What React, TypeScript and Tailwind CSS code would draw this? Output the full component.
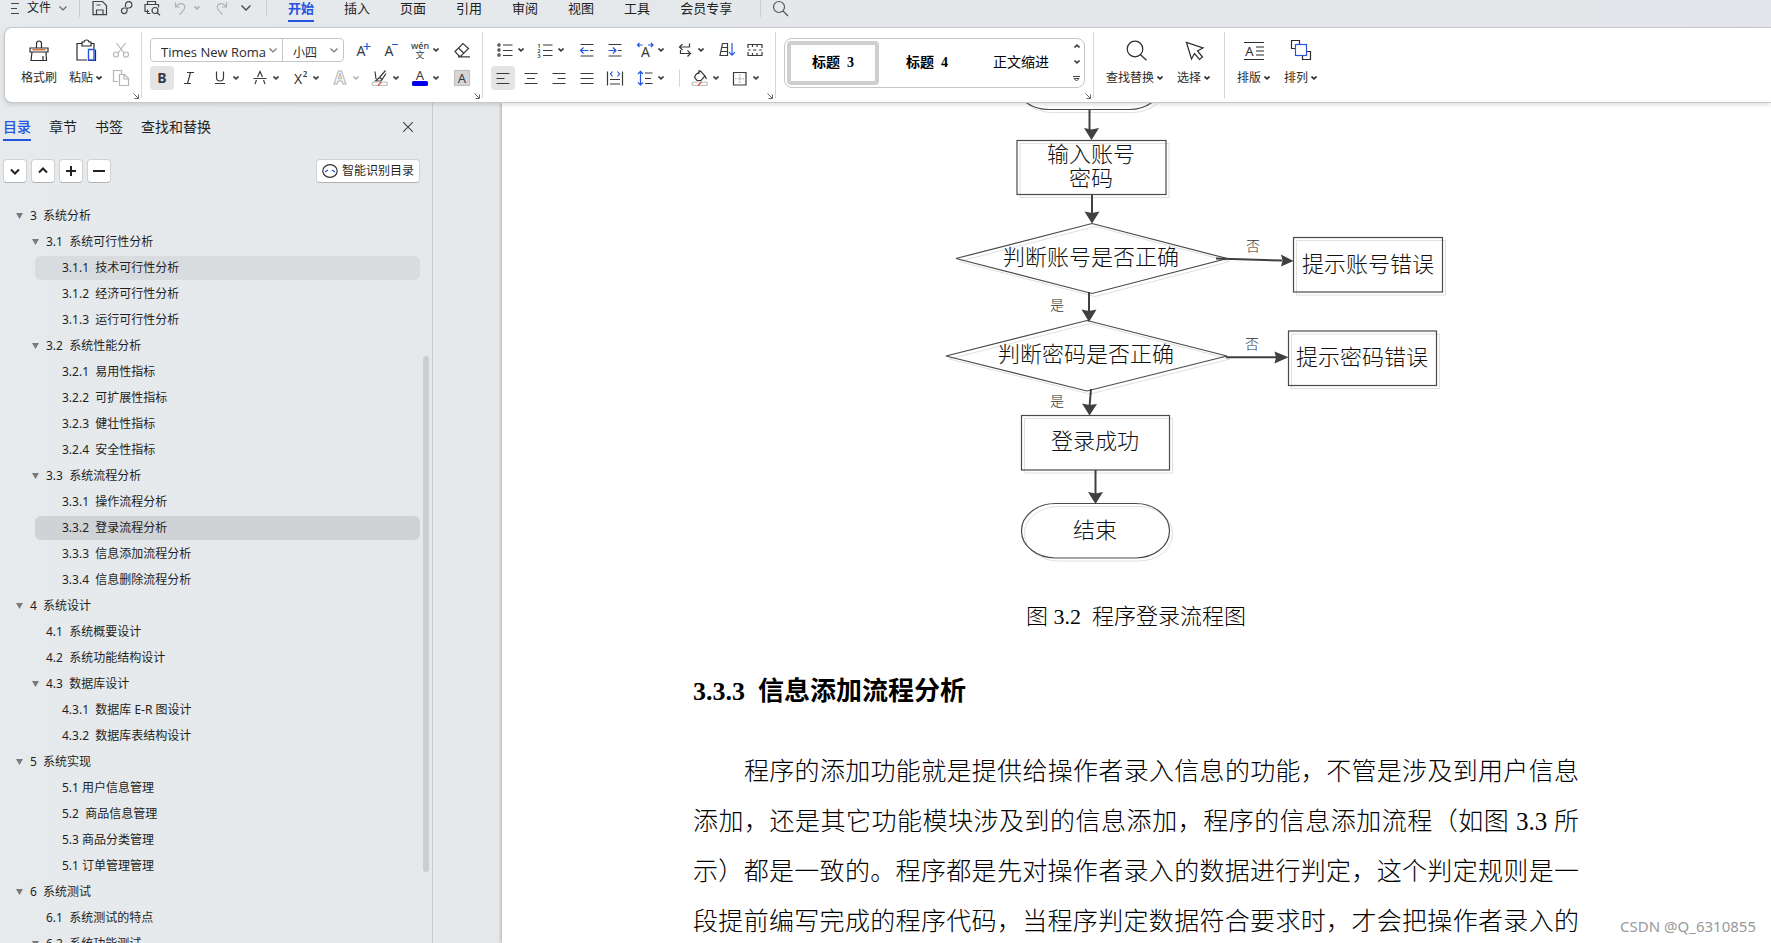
import { useState } from "react";
import type { ReactNode } from "react";
import { clsx } from "clsx";

const MENUS = ["开始", "插入", "页面", "引用", "审阅", "视图", "工具", "会员专享"];

const SIDE_TABS = ["目录", "章节", "书签", "查找和替换"];

interface OutlineItem {
  level: 1 | 2 | 3;
  text: string;
  open?: boolean;
}

const OUTLINE: OutlineItem[] = [
  { level: 1, text: "3  系统分析", open: true },
  { level: 2, text: "3.1  系统可行性分析", open: true },
  { level: 3, text: "3.1.1  技术可行性分析" },
  { level: 3, text: "3.1.2  经济可行性分析" },
  { level: 3, text: "3.1.3  运行可行性分析" },
  { level: 2, text: "3.2  系统性能分析", open: true },
  { level: 3, text: "3.2.1  易用性指标" },
  { level: 3, text: "3.2.2  可扩展性指标" },
  { level: 3, text: "3.2.3  健壮性指标" },
  { level: 3, text: "3.2.4  安全性指标" },
  { level: 2, text: "3.3  系统流程分析", open: true },
  { level: 3, text: "3.3.1  操作流程分析" },
  { level: 3, text: "3.3.2  登录流程分析" },
  { level: 3, text: "3.3.3  信息添加流程分析" },
  { level: 3, text: "3.3.4  信息删除流程分析" },
  { level: 1, text: "4  系统设计", open: true },
  { level: 2, text: "4.1  系统概要设计" },
  { level: 2, text: "4.2  系统功能结构设计" },
  { level: 2, text: "4.3  数据库设计", open: true },
  { level: 3, text: "4.3.1  数据库 E-R 图设计" },
  { level: 3, text: "4.3.2  数据库表结构设计" },
  { level: 1, text: "5  系统实现", open: true },
  { level: 3, text: "5.1 用户信息管理" },
  { level: 3, text: "5.2  商品信息管理" },
  { level: 3, text: "5.3 商品分类管理" },
  { level: 3, text: "5.1 订单管理管理" },
  { level: 1, text: "6  系统测试", open: true },
  { level: 2, text: "6.1  系统测试的特点" },
  { level: 2, text: "6.2  系统功能测试", open: true },
];

const PARAGRAPH = [
  "程序的添加功能就是提供给操作者录入信息的功能，不管是涉及到用户信息",
  "添加，还是其它功能模块涉及到的信息添加，程序的信息添加流程（如图 3.3 所",
  "示）都是一致的。程序都是先对操作者录入的数据进行判定，这个判定规则是一",
  "段提前编写完成的程序代码，当程序判定数据符合要求时，才会把操作者录入的",
];

const BLUE = "#2454e0";

/* ---------- small shared pieces ---------- */

function Icon({ children, size = 20 }: { children: ReactNode; size?: number }) {
  return (
    <svg
      width={size}
      height={size}
      viewBox={`0 0 ${size} ${size}`}
      fill="none"
      stroke="currentColor"
      strokeWidth="1.2"
      className="shrink-0 overflow-visible"
      aria-hidden="true"
    >
      {children}
    </svg>
  );
}

function Caret() {
  return (
    <svg width="6" height="4" viewBox="0 0 6 4" fill="none" stroke="currentColor" strokeWidth="1.6" className="shrink-0" aria-hidden="true">
      <path d="M0.5 0.5 3 2.8 5.5 0.5" />
    </svg>
  );
}

function Tool({
  label,
  children,
  menu,
  active,
  faded,
  className,
}: {
  label: string;
  children: ReactNode;
  menu?: boolean;
  active?: boolean;
  faded?: boolean;
  className?: string;
}) {
  return (
    <button
      type="button"
      aria-label={label}
      className={clsx(
        "flex h-6 shrink-0 items-center rounded",
        menu ? "w-10 gap-[3px] pl-0.5" : "w-6 justify-center",
        active && "bg-[#e4e4e4]",
        faded ? "text-[#b3b5b7]" : "text-[#3a3a3a]",
        className,
      )}
    >
      <Icon>{children}</Icon>
      {menu && <Caret />}
    </button>
  );
}

function BigTool({ label, menu, children }: { label: string; menu?: boolean; children: ReactNode }) {
  return (
    <button type="button" className="flex shrink-0 flex-col items-center gap-1.5 px-1 pt-0.5 text-xs text-[#2b2b2b]">
      <Icon size={22}>{children}</Icon>
      <span className="flex items-center gap-[3px] leading-5">
        {label}
        {menu && <Caret />}
      </span>
    </button>
  );
}

function Launcher() {
  return (
    <button type="button" aria-label="更多设置" className="mr-0.5 flex h-3 w-1.5 shrink-0 items-center justify-start self-end text-[#666]">
      <svg width="6" height="6" viewBox="0 0 6 6" fill="none" stroke="currentColor" className="shrink-0" aria-hidden="true">
        <path d="M0.5 0.5 5 5M5.5 1.5v4h-4" />
      </svg>
    </button>
  );
}

function Divider() {
  return <div className="my-1 w-px shrink-0 self-stretch bg-[#d5d7d9]" />;
}

function Letter({ x, y, size, children, weight = 400, fill = "currentColor" }: {
  x: number;
  y: number;
  size: number;
  children: string;
  weight?: number;
  fill?: string;
}) {
  return (
    <text x={x} y={y} fontSize={size} fontWeight={weight} fill={fill} stroke="none" textAnchor="middle">
      {children}
    </text>
  );
}

/* ---------- top menu ---------- */

function MenuBar() {
  const [current, setCurrent] = useState("开始");
  return (
    <nav className="flex h-[27px] shrink-0 items-start text-[13px] text-[#222]">
      <button type="button" className="flex h-4 items-center pl-[10px] text-xs">
        <svg width="10" height="12" viewBox="0 0 10 12" stroke="#444" strokeWidth="1.2" aria-hidden="true">
          <path d="M1 1.5h8M1 6.5h6M1 11.5h8" />
        </svg>
        <span className="ml-[7px]">文件</span>
        <svg width="8" height="5" viewBox="0 0 8 5" fill="none" stroke="#666" strokeWidth="1.2" className="ml-2" aria-hidden="true">
          <path d="M0.5 0.5 4 4 7.5 0.5" />
        </svg>
      </button>
      <div className="ml-3 h-[17px] w-px bg-[#c9ccd0]" />
      <div className="flex h-4 items-center text-[#444]">
        <button type="button" aria-label="保存" className="ml-3">
          <Icon size={16}>
            <path d="M1 1.500h9.500l4 4v9.200H1zM4.500 14.500V10h6.500v4.500M4.500 5h4" />
          </Icon>
        </button>
        <button type="button" aria-label="输出" className="ml-3">
          <Icon size={16}>
            <path d="M5.500 7V4.800a3.200 3.200 0 1 1 3.200 3.200H4.300a2.800 2.800 0 1 0 2.700 2.800V8" />
          </Icon>
        </button>
        <button type="button" aria-label="打印预览" className="ml-2">
          <Icon size={16}>
            <path d="M3.500 4.500V1.500h8v3M5 11.500H1v-7h13.500v3M3.500 9.500v4h3" />
            <circle cx="11" cy="10.500" r="3" />
            <path d="m13.200 12.700 2.800 2.600" />
          </Icon>
        </button>
        <button type="button" aria-label="撤销" className="ml-3.5 text-[#adb0b4]">
          <Icon size={14}>
            <path d="M1.500 1.500V6H6M1.500 6C4 2 9 1.500 10.500 4.500c1.200 3-1 5-5 9" />
          </Icon>
        </button>
        <span className="ml-1.5 text-[#adb0b4]"><Caret /></span>
        <button type="button" aria-label="恢复" className="ml-3.5 text-[#adb0b4]">
          <Icon size={14}>
            <path d="M12.500 1.500V6H8M12.500 6C10 2 5 1.500 3.500 4.500c-1.200 3 1 5 5 9" />
          </Icon>
        </button>
        <button type="button" aria-label="自定义" className="ml-[13px]">
          <svg width="10" height="6" viewBox="0 0 10 6" fill="none" stroke="#444" strokeWidth="1.300" aria-hidden="true">
            <path d="M0.500 0.500 5 5 9.500 0.500" />
          </svg>
        </button>
      </div>
      <div className="ml-[15px] h-[17px] w-px bg-[#c9ccd0]" />
      <div className="ml-[21px] flex gap-[30px]">
        {MENUS.map((m) => (
          <button
            key={m}
            type="button"
            onClick={() => setCurrent(m)}
            className={clsx(
              "h-[22px] border-b-2 pb-1 leading-4",
              m === current ? "border-[#2454e0] font-bold text-[#2454e0]" : "border-transparent",
            )}
          >
            {m}
          </button>
        ))}
      </div>
      <div className="ml-7 h-[17px] w-px bg-[#c9ccd0]" />
      <button type="button" aria-label="搜索" className="ml-3 text-[#555]">
        <Icon size={16}>
          <circle cx="6" cy="7" r="5.500" />
          <path d="m10 11 5 5" />
        </Icon>
      </button>
    </nav>
  );
}

/* ---------- ribbon ---------- */

function ClipboardGroup() {
  return (
    <div className="flex">
      <div className="flex pt-2.5 pl-3">
        <BigTool label="格式刷">
          <path d="M8.500 8V3.500a2.500 2.500 0 0 1 5 0V8M2 8h18v4H2zM4 12l-1 8.500h15.500L18 12" />
          <path d="M15 16v4" />
          <path d="M4.500 9.800h13" stroke="#e0703a" strokeWidth="1.500" />
        </BigTool>
        <div className="ml-1">
          <BigTool label="粘贴" menu>
            <path d="M7 3.500H2V20h10M16 3.500h3V9M7 2h2a2.500 2 0 0 1 5 0h2v4H7zM20.500 9.500V20.500H13" />
            <path d="M13.500 9.500h5.500v10.500h-5.500z" stroke={BLUE} strokeWidth="1.400" />
          </BigTool>
        </div>
        <div className="flex flex-col gap-1">
          <Tool label="剪切" faded className="ml-[3px]">
            <path d="M5.500 3 13 13M14.500 3 7 13" />
            <circle cx="5" cy="14.500" r="2.500" />
            <circle cx="15" cy="14.500" r="2.500" />
          </Tool>
          <Tool label="复制" faded className="ml-[3px]">
            <path d="M7 13.500H2.500V2.500h8V6M8.500 6.500h5l4 4v7h-9zM13 6.500v4.500h4.500" />
          </Tool>
        </div>
      </div>
      <Launcher />
    </div>
  );
}

function SelectArrow() {
  return (
    <svg width="8" height="5" viewBox="0 0 8 5" fill="none" stroke="#777" strokeWidth="1.200" className="pointer-events-none absolute top-[9px] right-[5px]" aria-hidden="true">
      <path d="M0.500 0.500 4 4 7.500 0.500" />
    </svg>
  );
}

function FontGroup() {
  return (
    <div className="flex">
      <div className="flex flex-col gap-1 pt-2.5 pl-2">
        <div className="flex">
          <div className="flex h-6 w-[194px] rounded border border-[#c4c6c8] text-[#2b2b2b]">
            <div className="relative w-[132px] border-r border-[#c4c6c8]">
              <select aria-label="字体" className="h-full w-full appearance-none pl-2.5 font-[Open_Sans,sans-serif] text-[13px] leading-5">
                <option>Times New Roma</option>
              </select>
              <SelectArrow />
            </div>
            <div className="relative flex-1">
              <select aria-label="字号" className="h-full w-full appearance-none pl-2.5 text-xs">
                <option>小四</option>
              </select>
              <SelectArrow />
            </div>
          </div>
          <Tool label="增大字号" className="ml-[7px]">
            <Letter x={8} y={15.5} size={14}>A</Letter>
            <path d="M14 3v7M10.500 6.500h7" stroke={BLUE} />
          </Tool>
          <Tool label="减小字号" className="ml-1">
            <Letter x={8} y={15.5} size={14}>A</Letter>
            <path d="M11 4.500h6" stroke={BLUE} />
          </Tool>
          <Tool label="拼音指南" menu className="ml-[5px]">
            <Letter x={10} y={9} size={9} weight={500}>wén</Letter>
            <Letter x={10} y={18} size={9}>文</Letter>
          </Tool>
          <Tool label="清除格式" className="ml-0.5">
            <path d="M3 11.500 11 3.500l5.500 5L9 16H7zM6.500 8l5.500 5.500M6 16.800h12" />
          </Tool>
        </div>
        <div className="flex">
          <Tool label="加粗" active>
            <Letter x={10} y={15} size={14} weight={700}>B</Letter>
          </Tool>
          <Tool label="倾斜" className="ml-[3px]">
            <path d="M8 4.500h7M5 15.500h7M11.500 4.500l-3 11" />
          </Tool>
          <Tool label="下划线" menu className="ml-[7px]">
            <path d="M6.500 3.500v6a3.500 3.500 0 0 0 7 0v-6M5 15.500h10" />
          </Tool>
          <Tool label="删除线" menu>
            <path d="M3.500 10.500h13M7.500 9 10 3.500 12.500 9M6.500 12l-1.500 4M13.500 12l1.500 4" />
          </Tool>
          <Tool label="上标" menu>
            <Letter x={8} y={15.5} size={14}>X</Letter>
            <Letter x={15} y={9} size={8} weight={600}>2</Letter>
          </Tool>
          <Tool label="文字效果" menu faded>
            <text x="10" y="15.500" fontSize="17" fontWeight="700" fill="#fff" stroke="currentColor" strokeWidth="1" textAnchor="middle">A</text>
          </Tool>
          <Tool label="突出显示" menu>
            <path d="m15.500 2.500-6 7 2.500 2 4-6M9.500 9.500l-4 3.500h5.500l1-1.500M5 3.500l1 7.500" />
            <rect x="2" y="14" width="15.500" height="3.500" rx="1.700" stroke="#bbb" />
            <path d="m8 17.500 3.500-3.500" stroke="#e05050" />
          </Tool>
          <Tool label="字体颜色" menu>
            <Letter x={10} y={12} size={13}>A</Letter>
            <rect x="2" y="13" width="16" height="5" rx="1.500" fill="#0000f0" stroke="none" />
          </Tool>
          <Tool label="字符底纹" className="ml-0.5">
            <rect x="2.500" y="2.500" width="15" height="15" fill="#d6d6d6" stroke="#c2c2c2" />
            <Letter x={10} y={15} size={13}>A</Letter>
          </Tool>
        </div>
      </div>
      <Launcher />
    </div>
  );
}

function ParagraphGroup() {
  return (
    <div className="flex">
      <div className="flex flex-col gap-1 pt-2.5 pl-2">
        <div className="flex pl-0.5">
          <Tool label="项目符号" menu>
            <circle cx="4" cy="5" r="1.100" />
            <circle cx="4" cy="10" r="1.100" />
            <circle cx="4" cy="15" r="1.100" />
            <path d="M8 5h9.500M8 10.500h9.500M8 15.500h9.500" />
          </Tool>
          <Tool label="编号" menu>
            <Letter x={4} y={7.5} size={6} weight={600}>1</Letter>
            <Letter x={4} y={12.500} size={6} weight={600}>2</Letter>
            <Letter x={4} y={17.500} size={6} weight={600}>3</Letter>
            <path d="M8 5h9.500M8 10.500h9.500M8 15.500h9.500" />
          </Tool>
          <Tool label="减少缩进" className="ml-0.5">
            <path d="M3.500 4.500h13M13 10.500h3.500M3.500 16h13" />
            <path d="M3.500 10.500h8M6.500 7.500l-3 3 3 3" stroke={BLUE} />
          </Tool>
          <Tool label="增加缩进" className="ml-1">
            <path d="M3.500 4.500h13M13 10.500h3.500M3.500 16h13" />
            <path d="M3.500 10.500h7.500M8 7.500l3 3-3 3" stroke={BLUE} />
          </Tool>
          <Tool label="中文版式" menu className="ml-1.5">
            <Letter x={10.5} y={16.5} size={14}>A</Letter>
            <path d="M2.500 5h5M4.500 3l-2 2 2 2M13 5h5M16 3l2 2-2 2" stroke={BLUE} />
          </Tool>
          <Tool label="换行标记" menu>
            <path d="M14.500 3.500v3.500h-10M7.500 4l-3 3 3 3M5.500 10v3.500h10M12.500 10.500l3 3-3 3" />
          </Tool>
          <Tool label="排序" className="ml-0.5">
            <path d="M3 15.500 5.500 3.500h5v12zM5 7.500h5M4.500 11.500h5.500" />
            <path d="M15 3v12M12 12.200l3 3 3-3" stroke={BLUE} />
          </Tool>
          <Tool label="制表位" className="ml-1">
            <path d="M3 8V4.500h4.500V7M7.500 4.500H12V7M12 4.500h5V8M3 12v3.500h4.500V13M7.500 15.500H12V13M12 15.500h5V12M3 10h2.500M8 10h3.500M14 10h3" />
          </Tool>
        </div>
        <div className="flex items-center gap-1">
          <Tool label="左对齐" active>
            <path d="M3.500 5.500h13M3.500 10.500h8M3.500 15.500h13" />
          </Tool>
          <Tool label="居中">
            <path d="M3.500 5.500h13M6 10.500h8M3.500 15.500h13" />
          </Tool>
          <Tool label="右对齐">
            <path d="M3.500 5.500h13M8.500 10.500h8M3.500 15.500h13" />
          </Tool>
          <Tool label="两端对齐">
            <path d="M3.500 5.500h13M3.500 10.500h13M3.500 15.500h13" />
          </Tool>
          <Tool label="分散对齐">
            <path d="M2.500 3.500v14M17.500 3.500v14M5 11.500h10M5 16h10" />
            <path d="m7.500 3.500-2 2.500 2 2.500M12.500 3.500l2 2.500-2 2.500" stroke={BLUE} />
          </Tool>
          <Tool label="行距" menu className="ml-0.5">
            <path d="M10 5h7.500M10 10.500h6M10 15.500h7.500" />
            <path d="M5.500 3.500v13.500M3 6l2.500-2.700L8 6M3 14.500 5.500 17 8 14.500" stroke={BLUE} />
          </Tool>
          <div className="ml-0.5 h-[18px] w-px bg-[#d5d7d9]" />
          <div className="ml-1 flex">
            <Tool label="底纹颜色" menu>
              <path d="m6 6.500 4.500-3.500 4.500 5-4 4.500H7L4.500 9.500zM9 2v4M15 8l1.500 3" />
              <rect x="2" y="14" width="15.500" height="3.500" rx="1.700" stroke="#bbb" />
              <path d="m8 17.500 3.500-3.500" stroke="#e05050" />
            </Tool>
            <Tool label="边框" menu className="-mr-1">
              <path d="M3.500 4.500h12.500V17H3.500z" />
              <path d="M9.750 6v10M5 10.750h10" stroke="#aaa" strokeDasharray="1.500 1" />
            </Tool>
          </div>
        </div>
      </div>
      <Launcher />
    </div>
  );
}

function StyleGallery() {
  return (
    <div className="flex">
      <div className="pt-2.5 pl-2">
        <div className="flex h-[50px] w-[301px] items-center gap-0.5 rounded-lg border border-[#c4c6c8] pl-0.5 font-[Liberation_Serif,Noto_Sans_CJK_SC,serif] text-sm text-black">
          <button type="button" className="h-11 w-[92px] rounded border-4 border-[#cfcfcf] font-bold whitespace-pre">
            标题  3
          </button>
          <button type="button" className="h-11 w-[92px] font-bold whitespace-pre">
            标题  4
          </button>
          <button type="button" className="h-11 w-[92px]">
            正文缩进
          </button>
          <div className="flex flex-1 flex-col items-center gap-3 text-[#444]">
            <button type="button" aria-label="上一行" className="rotate-180">
              <Caret />
            </button>
            <button type="button" aria-label="下一行">
              <Caret />
            </button>
            <button type="button" aria-label="展开样式">
              <svg width="7" height="6" viewBox="0 0 7 6" fill="none" stroke="currentColor" aria-hidden="true">
                <path d="M0 0.500h7M1 2.500h5L3.500 5z" />
              </svg>
            </button>
          </div>
        </div>
      </div>
      <Launcher />
    </div>
  );
}

function Ribbon() {
  return (
    <div className="z-10 ml-1 flex h-[76px] shrink-0 overflow-hidden rounded-l-lg border border-r-0 border-[#c6c9cc] bg-white shadow-[0_2px_4px_rgba(0,0,0,0.12)]">
      <ClipboardGroup />
      <Divider />
      <FontGroup />
      <Divider />
      <ParagraphGroup />
      <Divider />
      <StyleGallery />
      <Divider />
      <div className="flex items-start gap-1.5 pt-2.5 pr-2.5 pl-2">
        <BigTool label="查找替换" menu>
          <circle cx="11" cy="9" r="7.800" />
          <path d="m16.500 14.700 6 5.500" />
        </BigTool>
        <BigTool label="选择" menu>
          <path d="M3.500 2.500 8.500 19l3-5.500 5 6 3-2.500-5-6 5.500-3z" />
        </BigTool>
      </div>
      <Divider />
      <div className="flex items-start gap-1.5 pt-2.5 pl-2">
        <BigTool label="排版" menu>
          <path d="M1 2.500h20M1 19.500h20M13 7h8M13 11h8M13 15h8" />
          <Letter x={6.5} y={16} size={13}>A</Letter>
        </BigTool>
        <BigTool label="排列" menu>
          <path d="M5.500 8.500h-4v-8h8v4M16.500 11.500h4v8h-8v-4" />
          <rect x="5.500" y="4.500" width="11" height="11" stroke={BLUE} />
        </BigTool>
      </div>
    </div>
  );
}

/* ---------- outline pane ---------- */

function OutlinePane() {
  const [tab, setTab] = useState("目录");
  const [selected, setSelected] = useState(12);

  return (
    <aside className="flex w-[433px] shrink-0 flex-col border-r border-[#c9ccce] text-[#1f1f1f]">
      <div className="flex items-start pt-3 pl-[3px] text-sm">
        <div className="flex flex-1 gap-[18px]">
          {SIDE_TABS.map((t) => (
            <button
              key={t}
              type="button"
              onClick={() => setTab(t)}
              className={clsx(
                "h-[26px] border-b-2 leading-6",
                t === tab ? "border-[#2454e0] font-medium text-[#2454e0]" : "border-transparent",
              )}
            >
              {t}
            </button>
          ))}
        </div>
        <button type="button" aria-label="关闭" className="mt-[7px] mr-[19px]">
          <svg width="10" height="10" viewBox="0 0 10 10" stroke="#444" strokeWidth="1.100" aria-hidden="true">
            <path d="m0 0 10 10M10 0 0 10" />
          </svg>
        </button>
      </div>

      <div className="mt-[18px] flex gap-1 pr-3 pl-[3px]">
        {[
          { label: "全部展开", d: "M3 5.500 7 9.500 11 5.500" },
          { label: "全部折叠", d: "M3 8.500 7 4.500 11 8.500" },
          { label: "提升级别", d: "M7 2v10M2 7h10" },
          { label: "降低级别", d: "M1 7h12" },
        ].map((b) => (
          <button
            key={b.label}
            type="button"
            aria-label={b.label}
            className="flex size-6 items-center justify-center rounded border border-[#cfd2d4] border-b-[#b0b3b5] bg-white"
          >
            <svg width="14" height="14" viewBox="0 0 14 14" fill="none" stroke="#222" strokeWidth="2" aria-hidden="true">
              <path d={b.d} />
            </svg>
          </button>
        ))}
        <button
          type="button"
          className="ml-auto flex h-6 items-center gap-1 rounded border border-[#cfd2d4] border-b-[#b0b3b5] bg-white px-[5px] text-xs"
        >
          <svg width="16" height="14" viewBox="0 0 16 14" fill="none" stroke="#333" strokeWidth="1.200" aria-hidden="true">
            <ellipse cx="8" cy="7" rx="7.200" ry="6.300" />
            <path d="m3 8 3-2M13 8l-3-2" stroke={BLUE} strokeWidth="1.400" />
          </svg>
          智能识别目录
        </button>
      </div>

      <div className="mt-5 flex min-h-0 flex-1 overflow-hidden">
        <ul className="flex-1 text-xs">
          {OUTLINE.map((item, i) => (
            <li key={item.text} className="flex h-[26px] items-center">
              <button
                type="button"
                onClick={() => setSelected(i)}
                className={clsx(
                  "flex h-6 flex-1 items-center gap-[7px] rounded-md pl-[13px] whitespace-pre",
                  item.level === 1 && "ml-[3px]",
                  item.level === 2 && "ml-[19px]",
                  item.level === 3 && "ml-[35px]",
                  i === selected ? "bg-[#cfd3d5]" : i === 2 && "bg-[#d9dcde]",
                )}
              >
                <svg width="7" height="6" viewBox="0 0 7 6" fill={item.open ? "#7a7a7a" : "none"} aria-hidden="true">
                  <path d="M0 0h7L3.500 6z" />
                </svg>
                {item.text}
              </button>
            </li>
          ))}
        </ul>
        <div className="mt-[153px] mr-[3px] ml-[3px] h-[516px] w-1.5 shrink-0 rounded-full bg-[#cbcdcf]" />
      </div>
    </aside>
  );
}

/* ---------- document ---------- */

const SHAPES = (
  <>
    <rect x="1015" y="55" width="148" height="54.500" rx="34" ry="27" />
    <rect x="1017" y="140.500" width="149" height="54" />
    <path d="M1092 223.500 1227 258.500 1092 293.500 956 258.500z" />
    <rect x="1293.500" y="237.500" width="149" height="54.500" />
    <path d="M1087 320.500 1227 356 1087 391 946 356z" />
    <rect x="1288.500" y="331" width="148" height="54.500" />
    <rect x="1021.500" y="415.500" width="148" height="54.500" />
    <rect x="1021.500" y="503.500" width="148" height="54.500" rx="34" ry="27" />
  </>
);

const NODE_TEXTS = [
  { x: 1091, y: 154, text: "输入账号" },
  { x: 1091, y: 178, text: "密码" },
  { x: 1091, y: 257, text: "判断账号是否正确" },
  { x: 1368, y: 264, text: "提示账号错误" },
  { x: 1086, y: 354, text: "判断密码是否正确" },
  { x: 1362, y: 357, text: "提示密码错误" },
  { x: 1095, y: 441, text: "登录成功" },
  { x: 1095, y: 530, text: "结束" },
];

const EDGE_TEXTS = [
  { x: 1253, y: 246, text: "否" },
  { x: 1057, y: 305, text: "是" },
  { x: 1252, y: 344, text: "否" },
  { x: 1057, y: 401, text: "是" },
];

function LoginFlowchart() {
  return (
    <svg
      viewBox="940 103 510 461"
      width="510"
      height="461"
      className="ml-[247px] block"
      role="img"
      aria-label="程序登录流程图"
    >
      <g fill="none" stroke="#e0e0e0" transform="translate(3 3)">{SHAPES}</g>
      <g fill="none" stroke="#4a4a4a" strokeWidth="1.200">{SHAPES}</g>
      <g stroke="#404040" strokeWidth="2">
        <path d="M1089.500 109.500V130M1092 195v18M1089 292v20M1091 389l-1.500 18M1095.500 470v24M1216 258.500l66 2M1226 357.300h50" />
      </g>
      <g fill="#404040">
        <path d="M1084 128 1091.500 129.500 1099 128 1091.500 140z" />
        <path d="M1084.500 211.500 1092 213 1099.500 211.500 1092 223.500z" />
        <path d="M1081.500 309.500 1089 311 1096.500 309.500 1089 322z" />
        <path d="M1082 403.500 1089.500 405 1097 404 1089.500 415.500z" />
        <path d="M1088 492 1095.500 493.500 1103 492 1095.500 504z" />
        <path d="M1281 254.500 1282.500 260.500 1281 266.500 1293.500 261z" />
        <path d="M1274.500 351.500 1276 357.300 1274.500 363.500 1288.500 357.300z" />
      </g>
      <g fill="#111" fontSize="22" textAnchor="middle" dominantBaseline="central">
        {NODE_TEXTS.map((n) => (
          <text key={n.text} x={n.x} y={n.y}>{n.text}</text>
        ))}
      </g>
      <g fill="#333" fontSize="14" textAnchor="middle" dominantBaseline="central">
        {EDGE_TEXTS.map((n) => (
          <text key={n.y} x={n.x} y={n.y}>{n.text}</text>
        ))}
      </g>
    </svg>
  );
}

function DocumentPage() {
  return (
    <main className="relative ml-[69px] flex-1 overflow-hidden bg-white shadow-[-1px_0_3px_rgba(0,0,0,0.25)]">
      <article className="ml-[191px] w-[886px] font-[Liberation_Serif,Noto_Sans_CJK_SC,serif] font-light text-black">
        <LoginFlowchart />
        <p className="mt-7 text-center text-[22px] leading-[50px] whitespace-pre">图 3.2  程序登录流程图</p>
        <h3 className="mt-[25px] text-[26px] leading-[50px] font-bold whitespace-pre">3.3.3  信息添加流程分析</h3>
        <p className="mt-[30px] text-[25px] leading-[50px]">
          {PARAGRAPH.map((line, i) => (
            <span
              key={line}
              className={clsx("block text-justify whitespace-nowrap [text-align-last:justify]", i === 0 && "pl-[51px]")}
            >
              {line}
            </span>
          ))}
        </p>
      </article>
      <div className="absolute right-[15px] bottom-[5px] text-[15px] leading-6 text-[#999]">CSDN @Q_6310855</div>
    </main>
  );
}

export default function App() {
  return (
    <div className="flex h-screen flex-col overflow-hidden bg-linear-to-r from-[#e6eaec] to-[#e4e5ea] font-[Noto_Sans,Noto_Sans_CJK_SC,sans-serif]">
      <MenuBar />
      <Ribbon />
      <div className="flex min-h-0 flex-1">
        <OutlinePane />
        <DocumentPage />
      </div>
    </div>
  );
}
